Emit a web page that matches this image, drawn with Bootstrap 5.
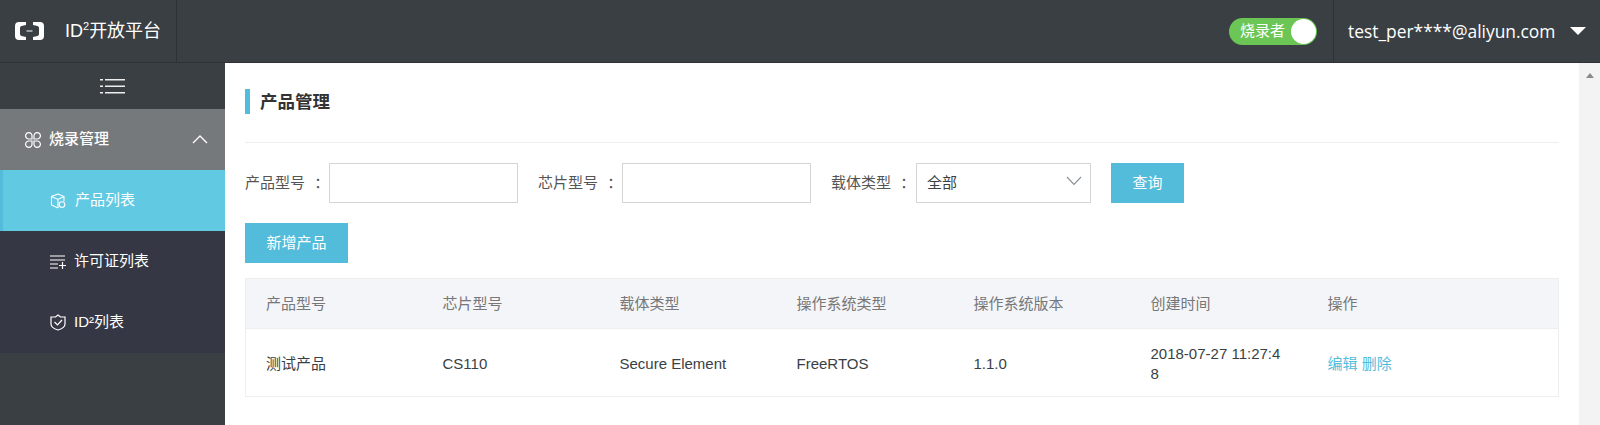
<!DOCTYPE html>
<html lang="zh-CN">
<head>
  <meta charset="UTF-8" />
  <meta name="viewport" content="width=device-width, initial-scale=1" />
  <title>ID²开放平台</title>
  <link href="https://cdn.jsdelivr.net/npm/bootstrap@5.3.0/dist/css/bootstrap.min.css" rel="stylesheet" />
  <style>
    html, body { height: 425px; overflow: hidden; }
    body {
      font-family: "Liberation Sans", "Noto Sans CJK SC", sans-serif;
      font-size: 15px;
      color: #3a3f44;
      background: #fff;
    }
    .top-bar {
      height: 63px;
      background: #3a3f44;
      border-bottom: 1px solid #2e3236;
      color: #fff;
      padding: 0;
    }
    .brand-box {
      width: 177px;
      height: 62px;
      padding-left: 15px;
      border-right: 1px solid #2e3236;
      gap: 21px;
      font-size: 18px;
    }
    .brand-box sup { font-size: 11px; top: -.55em; }
    .role-switch {
      width: 88px;
      height: 27px;
      border-radius: 14px;
      background: #6cc655;
      padding: 0 1px 0 11px;
      font-size: 15px;
      margin-right: 16px;
    }
    .role-knob { width: 25px; height: 25px; border-radius: 50%; background: #fff; }
    .user-box {
      height: 62px;
      width: 267px;
      padding-left: 14px;
      border-left: 1px solid #2e3236;
      font-family: "Open Sans", "Noto Sans CJK SC", sans-serif;
      font-size: 17.4px;
      gap: 15px;
    }
    .caret-down {
      width: 0; height: 0;
      border-left: 8px solid transparent;
      border-right: 8px solid transparent;
      border-top: 8px solid #fff;
    }
    .main-row { height: 362px; }
    .side-bar { width: 225px; background: #3a3f44; color: #fff; flex: none; }
    .menu-toggle { height: 46px; }
    .menu-head, .menu-item { height: 61px; }
    .menu-head {
      background: #76797c;
      padding: 0 17px 0 25px;
      gap: 8px;
      font-weight: 500;
    }
    .menu-item { background: #353844; padding-left: 50px; gap: 8px; }
    .menu-item.is-active { background: #62c9e3; border-left: 3px solid #54bcdb; padding-left: 47px; gap: 9px; }
    .page-body { padding: 0 20px; min-width: 0; }
    .title-row { height: 80px; border-bottom: 1px solid #eee; padding-top: 26px; }
    .title-mark { width: 5px; height: 25px; background: #54bcdb; margin-right: 10px; }
    .title-text { font-size: 17.5px; font-weight: 700; color: #333; line-height: 27px; margin: 0; }
    .search-row { padding-top: 20px; height: 80px; }
    .search-label { flex: none; width: 84px; color: #555; line-height: 40px; white-space: nowrap; word-spacing: 5px; }
    .search-label.last-label { width: 85px; }
    .search-input.form-control, .search-input.form-select {
      height: 40px;
      border: 1px solid #d5d5d5;
      border-radius: 0;
      font-size: 15px;
      color: #3a3f44;
      padding: 0 10px;
    }
    .search-input.form-control { flex: none; width: 189px; margin-right: 20px; }
    .search-input.form-select { background-image: none; }
    .select-wrap { position: relative; flex: none; width: 175px; margin-right: 20px; }
    .select-arrow { position: absolute; right: 9px; top: 13px; }
    .btn-cyan, .btn-cyan:hover {
      flex: none;
      background: #54bcdb;
      color: #fff;
      border: 0;
      border-radius: 0;
      height: 40px;
      font-size: 15px;
      padding: 0 21.5px;
    }
    .data-table {
      table-layout: fixed;
      width: 1314px;
      border: 1px solid #eee;
      margin: 15px 0 0;
      --bs-table-bg: transparent;
      font-size: 15px;
    }
    .data-table col.fixed-col { width: 177px; }
    .data-table th, .data-table td {
      padding: 0 20px;
      vertical-align: middle;
      border: 0;
      word-break: break-all;
      line-height: 20px;
    }
    .data-table th { height: 50px; background: #f4f5f9; color: #777; font-weight: 400; border-bottom: 1px solid #eee; }
    .data-table td { height: 68px; padding-top: 2px; color: #3a3f44; }
    .data-table a { color: #54bcdb; text-decoration: none; }
    .scroll-bar { width: 21px; background: #f3f3f3; flex: none; padding-top: 10px; }
    .scroll-up {
      width: 0; height: 0;
      border-left: 4px solid transparent;
      border-right: 4px solid transparent;
      border-bottom: 5px solid #8a8a8a;
    }
  </style>
</head>
<body>
  <nav class="navbar top-bar flex-nowrap justify-content-between">
    <div class="brand-box d-flex align-items-center">
      <svg width="29" height="18" viewBox="0 0 29 18" fill="#fff">
        <path d="M4 0H11V3L6.5 4Q5 4.3 5 6V12Q5 13.700 6.500 14L11 15V18H4Q0 18 0 14V4Q0 0 4 0Z"/>
        <path d="M18 0H25Q29 0 29 4V14Q29 18 25 18H18V15L22.500 14Q24 13.700 24 12V6Q24 4.300 22.500 4L18 3Z"/>
        <rect x="11.500" y="8.500" width="6" height="1"/>
      </svg>
      <span>ID<sup>2</sup>开放平台</span>
    </div>
    <div class="d-flex align-items-center">
      <div class="role-switch d-flex align-items-center justify-content-between">
        <span>烧录者</span><span class="role-knob"></span>
      </div>
      <div class="user-box d-flex align-items-center">
        <span>test_per****@aliyun.com</span><span class="caret-down"></span>
      </div>
    </div>
  </nav>

  <div class="main-row d-flex">
    <aside class="side-bar">
      <div class="menu-toggle d-flex align-items-center justify-content-center">
        <svg width="25" height="15" viewBox="0 0 25 15" fill="#eee">
          <rect y="0" width="3" height="1.5"/><rect x="5" y="0" width="20" height="1.5"/>
          <rect y="6.5" width="3" height="1.5"/><rect x="5" y="6.5" width="20" height="1.5"/>
          <rect y="13" width="3" height="1.5"/><rect x="5" y="13" width="20" height="1.5"/>
        </svg>
      </div>
      <div class="menu-head d-flex align-items-center">
        <svg width="16" height="16" viewBox="0 0 16 16" fill="none" stroke="#fff" stroke-width="1.2">
          <path d="M7 7H4A3.200 3.200 0 1 1 7 4ZM9 7V4A3.200 3.200 0 1 1 12 7ZM9 9H12A3.200 3.200 0 1 1 9 12ZM7 9V12A3.200 3.200 0 1 1 4 9Z"/>
        </svg>
        <span class="flex-grow-1">烧录管理</span>
        <svg width="16" height="9" viewBox="0 0 16 9" fill="none" stroke="#fff" stroke-width="1.4"><path d="M1 8L8 1L15 8"/></svg>
      </div>
      <div class="menu-item is-active d-flex align-items-center">
        <svg width="16" height="16" viewBox="0 0 16 16" fill="none" stroke="#fff" stroke-width="1.1">
          <path d="M8 1L14 3.500V8M8 15L1.500 12V3.500L8 1"/><path d="M1.500 3.500L8 6.500L14 3.500M8 6.500V15"/>
          <circle cx="12" cy="11.500" r="2.800"/>
        </svg>
        <span>产品列表</span>
      </div>
      <div class="menu-item d-flex align-items-center">
        <svg width="16" height="14" viewBox="0 0 16 14" fill="none" stroke="#fff" stroke-width="1.2">
          <path d="M0 1H15M0 5H15M0 9H8M0 13H8M9 10.500H16M12.500 7V14"/>
        </svg>
        <span>许可证列表</span>
      </div>
      <div class="menu-item d-flex align-items-center">
        <svg width="16" height="17" viewBox="0 0 16 17" fill="none" stroke="#fff" stroke-width="1.2">
          <path d="M1 3H5.500L8 1L10.500 3H15V10Q15 14 8 16Q1 14 1 10Z"/><path d="M4.500 8L7.500 11L12 6"/>
        </svg>
        <span>ID²列表</span>
      </div>
    </aside>

    <main class="page-body flex-grow-1">
      <div class="title-row d-flex align-items-start">
        <span class="title-mark"></span>
        <h1 class="title-text">产品管理</h1>
      </div>
      <form class="search-row d-flex align-items-start">
        <label class="search-label">产品型号 ：</label>
        <input class="form-control search-input" type="text" />
        <label class="search-label">芯片型号 ：</label>
        <input class="form-control search-input" type="text" />
        <label class="search-label last-label">载体类型 ：</label>
        <div class="select-wrap">
          <select class="form-select search-input"><option>全部</option></select>
          <svg class="select-arrow" width="16" height="10" viewBox="0 0 16 10" fill="none" stroke="#8a8f94" stroke-width="1.1"><path d="M1 1L8 8.500L15 1"/></svg>
        </div>
        <button type="button" class="btn btn-cyan">查询</button>
      </form>
      <button type="button" class="btn btn-cyan d-block">新增产品</button>
      <table class="table data-table">
        <colgroup>
          <col class="fixed-col"><col class="fixed-col"><col class="fixed-col"><col class="fixed-col"><col class="fixed-col"><col class="fixed-col"><col>
        </colgroup>
        <thead>
          <tr><th>产品型号</th><th>芯片型号</th><th>载体类型</th><th>操作系统类型</th><th>操作系统版本</th><th>创建时间</th><th>操作</th></tr>
        </thead>
        <tbody>
          <tr>
            <td>测试产品</td><td>CS110</td><td>Secure Element</td><td>FreeRTOS</td><td>1.1.0</td>
            <td>2018-07-27 11:27:48</td>
            <td><a href="#">编辑</a> <a href="#">删除</a></td>
          </tr>
        </tbody>
      </table>
    </main>

    <div class="scroll-bar d-flex justify-content-center align-items-start"><span class="scroll-up"></span></div>
  </div>

  <script src="https://cdn.jsdelivr.net/npm/bootstrap@5.3.0/dist/js/bootstrap.bundle.min.js"></script>
</body>
</html>
